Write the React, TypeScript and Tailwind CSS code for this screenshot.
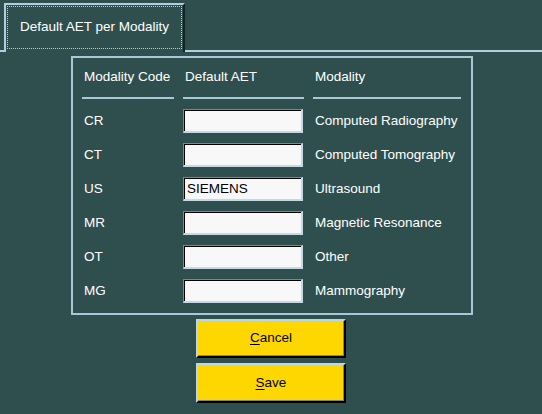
import React from 'react';

type Row = { code: string; aet: string; modality: string };

const ROWS: Row[] = [
    { code: 'CR', aet: '', modality: 'Computed Radiography' },
    { code: 'CT', aet: '', modality: 'Computed Tomography' },
    { code: 'US', aet: 'SIEMENS', modality: 'Ultrasound' },
    { code: 'MR', aet: '', modality: 'Magnetic Resonance' },
    { code: 'OT', aet: '', modality: 'Other' },
    { code: 'MG', aet: '', modality: 'Mammography' },
];

const AetBox: React.FC<{ value: string }> = ({ value }) => (
    <input
        readOnly
        value={value}
        className="w-[120px] h-[24px] bg-[#f8f8f8] text-black px-[3px] text-[13.5px] outline-none border-t border-l border-t-[#6f8c9c] border-l-[#6f8c9c] border-b-2 border-r-2 border-b-[#c4d9e6] border-r-[#c4d9e6] shadow-[inset_1px_1px_0_#000]"
    />
);

const YellowButton: React.FC<{ hotkey: string; rest: string; tall?: boolean }> = ({ hotkey, rest, tall }) => (
    <button
        type="button"
        className={`w-[150px] ${tall ? 'h-[40px]' : 'h-[39px]'} bg-[#ffd700] text-black text-[13.5px] border-t-2 border-l-2 border-t-[#bcd6e6] border-l-[#bcd6e6] border-b-2 border-r-2 border-b-black border-r-black shadow-[inset_-1px_-1px_0_#808080]`}
    >
        <span className="underline underline-offset-2">{hotkey}</span>
        {rest}
    </button>
);

export default function App() {
    return (
        <div
            className="w-[542px] h-[414px] bg-[#2f4f4f] text-white text-[13.5px] overflow-hidden"
            style={{ fontFamily: '"Liberation Sans", Arial, sans-serif' }}
        >
            {/* tab strip */}
            <div className="flex items-end h-[52px]">
                <div className="w-[4px] border-b-2 border-[#b4cde0]" />
                <div className="w-[181px] h-[49px] border-t-2 border-l-2 border-t-[#b4cde0] border-l-[#b4cde0] border-r-2 border-r-[#142424] p-[1px] pb-[3px]">
                    <div className="h-full border border-dotted border-[#f0b8c0] flex items-center justify-center">
                        Default AET per Modality
                    </div>
                </div>
                <div className="flex-1 border-b-2 border-[#b4cde0]" />
            </div>

            {/* group box */}
            <div className="ml-[71px] mt-[4px] w-[402px] h-[259px] border-2 border-[#aac6d8] pl-[9px]">
                <div className="flex gap-[9px]">
                    <div className="w-[92px] h-[41px] flex items-center pl-[2px] border-b-2 border-[#aac6d8]">Modality Code</div>
                    <div className="w-[121px] h-[41px] flex items-center pl-[2px] border-b-2 border-[#aac6d8]">Default AET</div>
                    <div className="w-[148px] h-[41px] flex items-center pl-[2px] border-b-2 border-[#aac6d8]">Modality</div>
                </div>
                <div className="pt-[5px]">
                    {ROWS.map((row) => (
                        <div key={row.code} className="flex gap-[9px] h-[34px] items-center">
                            <div className="w-[92px] pl-[2px]">{row.code}</div>
                            <div className="w-[121px]">
                                <AetBox value={row.aet} />
                            </div>
                            <div className="w-[148px] pl-[2px]">{row.modality}</div>
                        </div>
                    ))}
                </div>
            </div>

            {/* buttons */}
            <div className="ml-[71px] w-[400px] mt-[4px] flex flex-col items-center gap-[5px]">
                <YellowButton hotkey="C" rest="ancel" />
                <YellowButton hotkey="S" rest="ave" tall />
            </div>
        </div>
    );
}
